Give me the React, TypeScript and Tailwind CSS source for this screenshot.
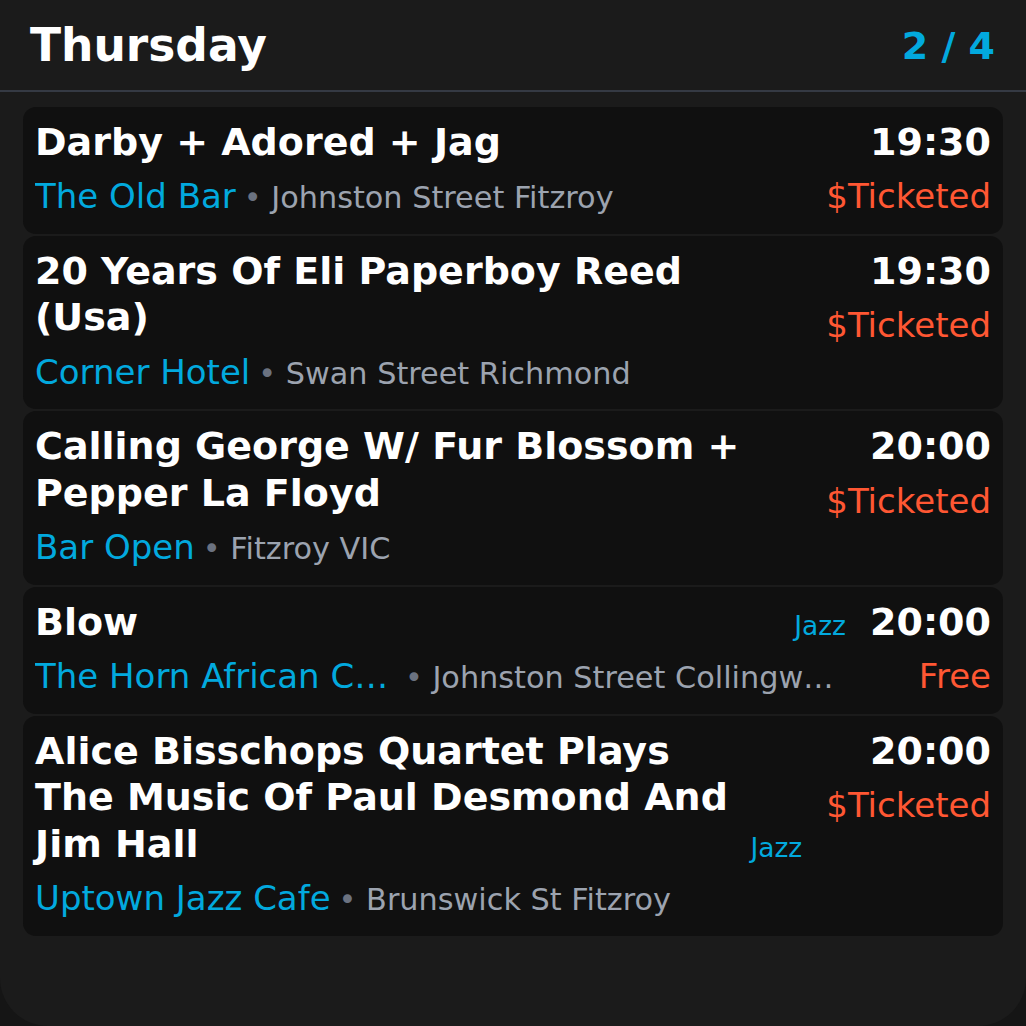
import React from 'react';

interface Gig {
  title: string;
  venue: string;
  address: string;
  time: string;
  price: string;
  genre?: string;
}

const gigs: Gig[] = [
  { title: 'Darby + Adored + Jag', venue: 'The Old Bar', address: 'Johnston Street Fitzroy', time: '19:30', price: '$Ticketed' },
  { title: '20 Years Of Eli Paperboy Reed (Usa)', venue: 'Corner Hotel', address: 'Swan Street Richmond', time: '19:30', price: '$Ticketed' },
  { title: 'Calling George W/ Fur Blossom + Pepper La Floyd', venue: 'Bar Open', address: 'Fitzroy VIC', time: '20:00', price: '$Ticketed' },
  { title: 'Blow', venue: 'The Horn African Cafe', address: 'Johnston Street Collingwood', time: '20:00', price: 'Free', genre: 'Jazz' },
  {
    title: 'Alice Bisschops Quartet Plays The Music Of Paul Desmond And Jim Hall',
    venue: 'Uptown Jazz Cafe',
    address: 'Brunswick St Fitzroy',
    time: '20:00',
    price: '$Ticketed',
    genre: 'Jazz',
  },
];

function GigCard({ gig }: { gig: Gig }) {
  return (
    <div className="flex gap-6 rounded-[13px] bg-[#101010] px-3 pt-3 pb-[11.5px]">
      {/* Left: title, genre, venue */}
      <div className="flex min-w-0 flex-1 flex-col">
        <div className="flex items-end gap-2">
          <h3 className="min-w-0 flex-1 text-[38px] font-bold leading-[46.5px] text-white">{gig.title}</h3>
          {gig.genre && (
            <span className="shrink-0 text-[26.5px] leading-normal text-[#02a9de]">{gig.genre}</span>
          )}
        </div>
        <div className="mt-[6px] flex min-w-0 items-baseline gap-2 leading-normal">
          <span className="truncate text-[34px] text-[#02a9de]">{gig.venue}</span>
          <span className="truncate text-[30.3px] text-[#9ca3af]">
            <span className="text-[#6b7280]">•</span> {gig.address}
          </span>
        </div>
      </div>

      {/* Right: time and price */}
      <div className="shrink-0 text-right">
        <div className="text-[38px] font-bold leading-[46.5px] text-white">{gig.time}</div>
        <div className="mt-[6px] text-[34px] leading-normal text-[#ff5733]">{gig.price}</div>
      </div>
    </div>
  );
}

export default function App() {
  return (
    <div className="h-[1026px] w-full overflow-hidden bg-[#151515] font-['DejaVu_Sans',sans-serif]">
      <div className="h-full overflow-hidden rounded-b-[48px] bg-[#1b1b1b]">
        {/* Header */}
        <div className="flex items-center justify-between border-b-2 border-[#353a44] pt-[18px] pr-[31px] pb-[15px] pl-[30px]">
          <h1 className="text-[45.5px] font-bold leading-tight text-white">Thursday</h1>
          <span className="text-[38px] font-bold leading-tight text-[#02a9de]">2 / 4</span>
        </div>

        {/* Gig list */}
        <div className="flex flex-col gap-[2px] px-[23px] pt-[15px]">
          {gigs.map((gig) => (
            <GigCard key={gig.title} gig={gig} />
          ))}
        </div>
      </div>
    </div>
  );
}
